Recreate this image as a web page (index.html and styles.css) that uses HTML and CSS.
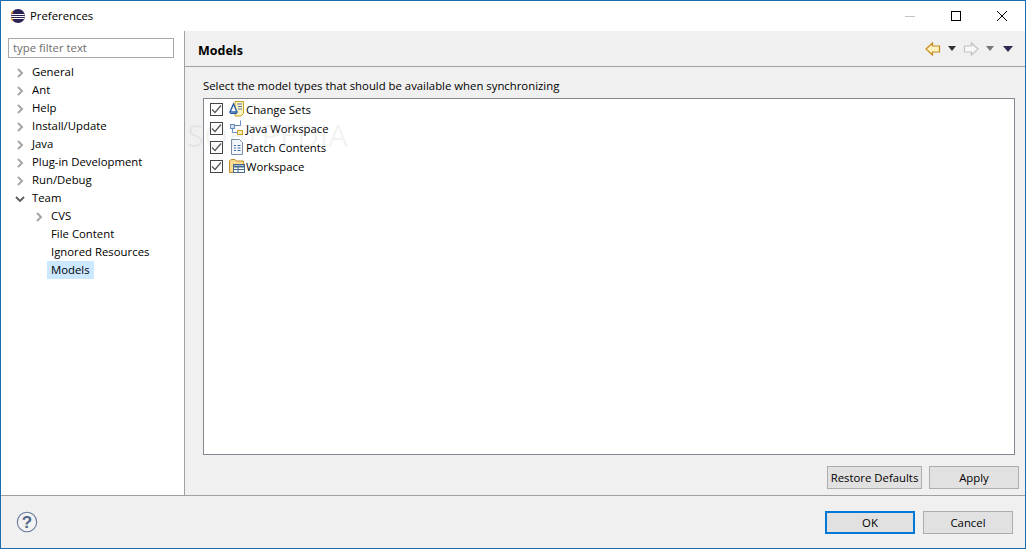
FILE: index.html
```html
<!DOCTYPE html>
<html lang="en">
<head>
<meta charset="utf-8">
<title>Preferences</title>
<link rel="stylesheet" href="styles.css">
</head>
<body>
<div class="window">
  <header class="titlebar">
    <svg class="app-icon" width="16" height="16" viewBox="0 0 16 16"><circle cx="8" cy="8" r="7" fill="#2c2255"/><path d="M1.300 6.200a7 7 0 0 1 1.600-3 M1.300 9.800a7 7 0 0 0 1.600 3" stroke="#f7941e" stroke-width="1.400" fill="none"/><path d="M1.500 6.500h13M1.200 8.500h13.600M1.700 10.500h12.600" stroke="#fff" stroke-width="1"/></svg>
    <span class="title-text">Preferences</span>
    <div class="win-controls">
      <span class="ctl"><svg width="12" height="12" viewBox="0 0 12 12"><path d="M1 6.500h10" stroke="#c4c4c4" stroke-width="1"/></svg></span>
      <span class="ctl"><svg width="12" height="12" viewBox="0 0 12 12"><rect x="1.500" y="1.500" width="9" height="9" fill="none" stroke="#000"/></svg></span>
      <span class="ctl"><svg width="12" height="12" viewBox="0 0 12 12"><path d="M1 1l10 10M11 1L1 11" stroke="#000" stroke-width="1"/></svg></span>
    </div>
  </header>
  <div class="main">
    <aside class="sidebar">
      <div class="filter">type filter text</div>
      <ul class="tree">
        <li class="node"><svg class="chev" width="10" height="10" viewBox="0 0 10 10"><path d="M3 1l4 4-4 4" class="chev-c"/></svg>General</li>
        <li class="node"><svg class="chev" width="10" height="10" viewBox="0 0 10 10"><path d="M3 1l4 4-4 4" class="chev-c"/></svg>Ant</li>
        <li class="node"><svg class="chev" width="10" height="10" viewBox="0 0 10 10"><path d="M3 1l4 4-4 4" class="chev-c"/></svg>Help</li>
        <li class="node"><svg class="chev" width="10" height="10" viewBox="0 0 10 10"><path d="M3 1l4 4-4 4" class="chev-c"/></svg>Install/Update</li>
        <li class="node"><svg class="chev" width="10" height="10" viewBox="0 0 10 10"><path d="M3 1l4 4-4 4" class="chev-c"/></svg>Java</li>
        <li class="node"><svg class="chev" width="10" height="10" viewBox="0 0 10 10"><path d="M3 1l4 4-4 4" class="chev-c"/></svg>Plug-in Development</li>
        <li class="node"><svg class="chev" width="10" height="10" viewBox="0 0 10 10"><path d="M3 1l4 4-4 4" class="chev-c"/></svg>Run/Debug</li>
        <li class="node"><svg class="chev" width="10" height="10" viewBox="0 0 10 10"><path d="M1 3l4 4 4-4" class="chev-o"/></svg>Team</li>
        <li class="node child"><svg class="chev" width="10" height="10" viewBox="0 0 10 10"><path d="M3 1l4 4-4 4" class="chev-c"/></svg>CVS</li>
        <li class="node leaf">File Content</li>
        <li class="node leaf">Ignored Resources</li>
        <li class="node leaf"><span class="selected">Models</span></li>
      </ul>
    </aside>
    <section class="panel">
      <div class="panel-head">
        <h1 class="panel-title">Models</h1>
        <div class="nav-tools">
          <svg class="back" width="16" height="14" viewBox="0 0 16 14"><path d="M7.500 1L1 7l6.500 6V10h7V4h-7z" fill="#fff3c4" stroke="#c98a1b" stroke-width="1.200"/></svg>
          <svg class="drop" width="8" height="5" viewBox="0 0 8 5"><path d="M0 0h8L4 5z" fill="#333"/></svg>
          <svg class="fwd" width="16" height="14" viewBox="0 0 16 14"><path d="M8.500 1L15 7l-6.500 6V10h-7V4h7z" fill="#f8f8f8" stroke="#c2c2c2" stroke-width="1.200"/></svg>
          <svg class="drop" width="8" height="5" viewBox="0 0 8 5"><path d="M0 0h8L4 5z" fill="#777"/></svg>
          <svg class="menu" width="10" height="6" viewBox="0 0 10 6"><path d="M0 0h10L5 6z" fill="#33264f"/></svg>
        </div>
      </div>
      <div class="panel-body">
        <p class="desc">Select the model types that should be available when synchronizing</p>
        <div class="list">
          <div class="row"><span class="check"><svg width="11" height="11" viewBox="0 0 11 11"><path d="M1 5.500l3 3 6-7" class="tick"/></svg></span>
            <svg class="ico" width="16" height="16" viewBox="0 0 16 16"><path d="M6 .5h8.500v12L12 15H6z" fill="#fdf3c0" stroke="#c9a227"/><path d="M8 3h5M9 5.500h4M9 8h4" stroke="#5577aa"/><path d="M4.500 3L1 11h7z" fill="#fff" stroke="#2a5ba8" stroke-width="1.400"/><path d="M1 12.500h7" stroke="#2a5ba8"/></svg>
            <span>Change Sets</span></div>
          <div class="row"><span class="check"><svg width="11" height="11" viewBox="0 0 11 11"><path d="M1 5.500l3 3 6-7" class="tick"/></svg></span>
            <svg class="ico" width="16" height="16" viewBox="0 0 16 16"><rect x="1.500" y="4.500" width="4" height="4" fill="#dfe9f7" stroke="#6b8fc4"/><rect x="8.500" y="10.500" width="5" height="4" fill="#fdeeb0" stroke="#c9a227"/><path d="M3.500 8.500v4h5M11.500 .5v5h-6" fill="none" stroke="#6b8fc4"/></svg>
            <span>Java Workspace</span></div>
          <div class="row"><span class="check"><svg width="11" height="11" viewBox="0 0 11 11"><path d="M1 5.500l3 3 6-7" class="tick"/></svg></span>
            <svg class="ico" width="16" height="16" viewBox="0 0 16 16"><path d="M2.500 .5h8l3 3v12h-11z" fill="#f4f6fa" stroke="#7d8ea8"/><path d="M5 6.500h2M5 9h2M5 11.500h2M8.500 6.500h3M8.500 9h3M8.500 11.500h3" stroke="#3c6ea8"/></svg>
            <span>Patch Contents</span></div>
          <div class="row"><span class="check"><svg width="11" height="11" viewBox="0 0 11 11"><path d="M1 5.500l3 3 6-7" class="tick"/></svg></span>
            <svg class="ico" width="16" height="16" viewBox="0 0 16 16"><path d="M.5 14.500V3l1.500-1.500h4L7.500 3h7v11.500z" fill="#fbdc8e" stroke="#c58a2a"/><rect x="4.500" y="6.500" width="11" height="8" fill="#fff" stroke="#4a6a8c"/><path d="M4.500 8.500h11" stroke="#4a6a8c" stroke-width="2"/><path d="M4.500 11.500h11M9 8.500v6" stroke="#4a6a8c"/></svg>
            <span>Workspace</span></div>
        </div>
        <div class="panel-actions">
          <button class="btn restore">Restore Defaults</button>
          <button class="btn apply">Apply</button>
        </div>
      </div>
    </section>
  </div>
  <footer class="footer">
    <svg class="help" width="22" height="22" viewBox="0 0 22 22"><circle cx="11" cy="11" r="9.700" fill="#f2f2f2" stroke="#64789c" stroke-width="1.100"/><text x="11" y="17" text-anchor="middle" class="help-q">?</text></svg>
    <div class="footer-btns">
      <button class="btn ok">OK</button>
      <button class="btn cancel">Cancel</button>
    </div>
  </footer>
  <div class="watermark">SOFTPEDIA</div>
</div>
</body>
</html>
```
FILE: styles.css
```css
* { box-sizing: border-box; }
html, body { margin: 0; height: 100%; }
body {
  font-family: "Open Sans", "Noto Sans", "Liberation Sans", sans-serif;
  font-size: 11.35px;
  color: #000;
  background: #fff;
}
.window {
  position: relative;
  width: 1026px;
  height: 549px;
  border: 1px solid #1b6cb0;
  display: flex;
  flex-direction: column;
  overflow: hidden;
}
.titlebar {
  height: 30px;
  flex: none;
  display: flex;
  align-items: center;
  padding-left: 9px;
  background: #fff;
}
.app-icon { flex: none; }
.title-text { margin: 0 0 2px 4px; }
.win-controls { margin-left: auto; display: flex; }
.ctl {
  width: 46px;
  height: 30px;
  display: flex;
  align-items: center;
  justify-content: center;
}
.main { flex: 1; display: flex; min-height: 0; }
.sidebar {
  width: 184px;
  flex: none;
  background: #fff;
  border-right: 1px solid #a0a0a0;
  padding: 7px 10px 0 7px;
}
.filter {
  height: 20px;
  width: 166px;
  border: 1px solid #a9a9a9;
  color: #6d6d6d;
  padding-left: 4px;
  line-height: 18px;
}
.tree { list-style: none; margin: 5px 0 0; padding: 0; }
.node {
  height: 18px;
  line-height: 18px;
  display: flex;
  align-items: center;
  padding: 0 0 0 7px;
  white-space: nowrap;
}
.chev { flex: none; margin-right: 7px; position: relative; top: 1px; }
.chev-c { fill: none; stroke: #a6a6a6; stroke-width: 2; }
.chev-o { fill: none; stroke: #5a5a5a; stroke-width: 1.800; }
.child { padding-left: 26px; }
.leaf { padding-left: 43px; }
.selected {
  background: #cce8ff;
  height: 18px;
  padding: 0 4px;
  margin-left: -4px;
  line-height: 18px;
}
.panel { flex: 1; background: #f0f0f0; display: flex; flex-direction: column; min-width: 0; }
.panel-head {
  height: 36px;
  flex: none;
  display: flex;
  align-items: center;
  border-bottom: 1px solid #a0a0a0;
  padding: 0 12px 0 13px;
}
.panel-title { margin: 4px 0 0; font-size: 12.5px; font-weight: 700; line-height: 20px; }
.nav-tools { margin-left: auto; display: flex; align-items: center; }
.drop { margin-left: 7px; margin-right: 9px; }
.fwd { margin-left: -2px; }
.panel-body { flex: 1; display: flex; flex-direction: column; padding: 10px 6px 6px 18px; min-height: 0; }
.desc { margin: 0; height: 21px; line-height: 17px; }
.list {
  height: 358px;
  margin-right: 4px;
  background: #fff;
  border: 1px solid #828790;
  padding: 1px 0 0 6px;
}
.row { height: 19px; display: flex; align-items: center; }
.check {
  width: 13px;
  height: 13px;
  border: 1px solid #444;
  background: #fff;
  display: flex;
  align-items: center;
  justify-content: center;
  flex: none;
}
.tick { fill: none; stroke: #555; stroke-width: 1.200; }
.ico { flex: none; margin-left: 6px; margin-right: 1px; }
.panel-actions { display: flex; justify-content: flex-end; gap: 7px; margin-top: 11px; }
.btn {
  font: inherit;
  color: #000;
  height: 23px;
  padding: 0;
  background: #e1e1e1;
  border: 1px solid #adadad;
  border-radius: 0;
}
.restore { width: 95px; }
.apply { width: 90px; }
.footer {
  flex: none;
  height: 53px;
  display: flex;
  align-items: center;
  background: #f0f0f0;
  border-top: 1px solid #a0a0a0;
  padding: 0 11px 0 15px;
}
.help-q { font-family: "Liberation Sans", sans-serif; font-size: 17px; font-weight: 700; fill: #51658a; }
.footer-btns { margin-left: auto; display: flex; gap: 8px; padding-right: 1px; }
.ok, .cancel { width: 90px; }
.ok { border: 2px solid #0078d7; }
.watermark {
  position: absolute;
  left: 186px;
  top: 113px;
  font-size: 31px;
  color: rgba(120, 120, 120, 0.09);
  pointer-events: none;
  white-space: nowrap;
}
```
